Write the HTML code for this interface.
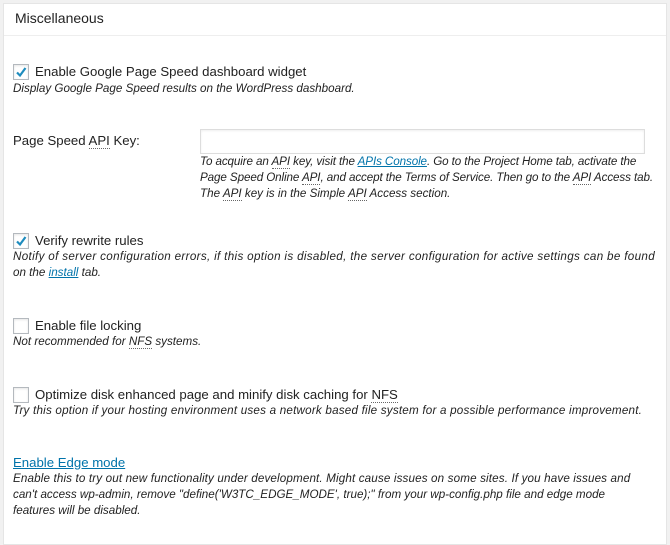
<!DOCTYPE html>
<html><head><meta charset="utf-8"><style>
body{margin:0;width:670px;height:528px;background:#f1f1f1;overflow:hidden;font-family:"Liberation Sans",sans-serif;color:#222;}
.panel{position:absolute;left:3px;top:3px;width:662px;height:540px;background:#fff;border:1px solid #e5e5e5;}
.hdr{position:absolute;left:0;top:0;width:662px;height:31px;border-bottom:1px solid #eee;}
.t{position:absolute;white-space:nowrap;line-height:16px;}
.lbl{font-size:13.2px;color:#222;}
.d{font-size:11.65px;font-style:italic;color:#222;}
.cb{position:absolute;width:14px;height:14px;border:1px solid #b4b9be;background:#fff;box-shadow:inset 0 1px 2px rgba(0,0,0,.1);}
.cb svg{position:absolute;left:0;top:0}
a{color:#0073aa;text-decoration:underline}
abbr{text-decoration:none;border-bottom:1px dotted #666}
.inp{position:absolute;left:200px;top:129px;width:443px;height:23px;border:1px solid #ddd;background:#fff;box-shadow:inset 0 1px 2px rgba(0,0,0,.07)}
</style></head><body>
<div class="panel"><div class="hdr"></div></div>
<div class="t lbl" style="left:15px;top:10px;font-size:14px">Miscellaneous</div>

<div class="cb" style="left:13px;top:64px"><svg width="14" height="14" viewBox="0 0 14 14"><path d="M3 7.5 L6 10.5 L11.5 3" fill="none" stroke="#1e8cbe" stroke-width="2.2"/></svg></div>
<div class="t lbl" style="left:35px;top:64px">Enable Google Page Speed dashboard widget</div>
<div class="t d" style="left:13px;top:81px">Display Google Page Speed results on the WordPress dashboard.</div>

<div class="t lbl" style="left:13px;top:133px">Page Speed <abbr>API</abbr> Key:</div>
<div class="inp"></div>
<div class="t d" style="left:200px;top:154px;letter-spacing:-0.1px">To acquire an <abbr>API</abbr> key, visit the <a>APIs Console</a>. Go to the Project Home tab, activate the</div>
<div class="t d" style="left:200px;top:170px;letter-spacing:-0.1px">Page Speed Online <abbr>API</abbr>, and accept the Terms of Service. Then go to the <abbr>API</abbr> Access tab.</div>
<div class="t d" style="left:200px;top:186px">The <abbr>API</abbr> key is in the Simple <abbr>API</abbr> Access section.</div>

<div class="cb" style="left:13px;top:233px"><svg width="14" height="14" viewBox="0 0 14 14"><path d="M3 7.5 L6 10.5 L11.5 3" fill="none" stroke="#1e8cbe" stroke-width="2.2"/></svg></div>
<div class="t lbl" style="left:35px;top:233px">Verify rewrite rules</div>
<div class="t d" style="left:13px;top:249px;letter-spacing:0.33px">Notify of server configuration errors, if this option is disabled, the server configuration for active settings can be found</div>
<div class="t d" style="left:13px;top:265px">on the <a>install</a> tab.</div>

<div class="cb" style="left:13px;top:318px"></div>
<div class="t lbl" style="left:35px;top:318px">Enable file locking</div>
<div class="t d" style="left:13px;top:334px">Not recommended for <abbr>NFS</abbr> systems.</div>

<div class="cb" style="left:13px;top:387px"></div>
<div class="t lbl" style="left:35px;top:387px">Optimize disk enhanced page and minify disk caching for <abbr>NFS</abbr></div>
<div class="t d" style="left:13px;top:403px;letter-spacing:0.21px">Try this option if your hosting environment uses a network based file system for a possible performance improvement.</div>

<div class="t lbl" style="left:13px;top:455px"><a>Enable Edge mode</a></div>
<div class="t d" style="left:13px;top:471px;letter-spacing:0.14px">Enable this to try out new functionality under development. Might cause issues on some sites. If you have issues and</div>
<div class="t d" style="left:13px;top:487px">can't access wp-admin, remove "define('W3TC_EDGE_MODE', true);" from your wp-config.php file and edge mode</div>
<div class="t d" style="left:13px;top:503px">features will be disabled.</div>
</body></html>
